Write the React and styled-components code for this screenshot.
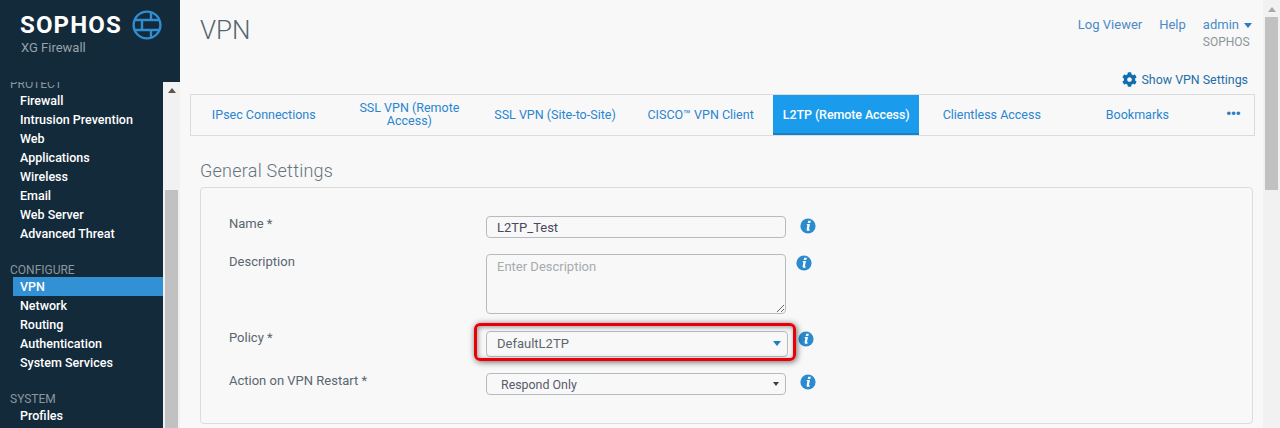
import React from "react";
import styled, { createGlobalStyle } from "styled-components";
import { FaCog } from "react-icons/fa";

const GlobalStyle = createGlobalStyle`
    html, body {
        margin: 0;
        height: 428px;
        overflow: hidden;
        background: #f8f8f8;
        font-family: Roboto, "Liberation Sans", sans-serif;
        font-size: 13px;
    }
    * {
        box-sizing: border-box;
    }
`;

const Page = styled.div`
    display: flex;
    width: 1280px;
    height: 428px;
    overflow: hidden;
`;

const Sidebar = styled.aside`
    width: 180px;
    flex-shrink: 0;
    display: flex;
    flex-direction: column;
    background: #132a3b;
`;

const Brand = styled.div`
    height: 82px;
    flex-shrink: 0;
    padding: 10px 0 0 20px;
`;

const BrandRow = styled.div`
    display: flex;
    align-items: center;
    gap: 10px;
    height: 30px;
`;

const BrandName = styled.span`
    color: #fff;
    font-size: 24px;
    font-weight: 700;
    letter-spacing: 1.15px;
    line-height: 30px;
`;

const BrandSub = styled.div`
    color: #97a2aa;
    font-size: 13px;
    margin: 0 0 0 1px;
    line-height: 16px;
`;

const SideBody = styled.div`
    flex: 1;
    display: flex;
    min-height: 0;
`;

const Nav = styled.nav`
    width: 163px;
    overflow: hidden;
`;

const NavInner = styled.div`
    margin-top: -5px;
`;

const Section = styled.div`
    margin-bottom: 20px;
`;

const SectionTitle = styled.div`
    color: #8b969e;
    font-size: 12px;
    line-height: 14px;
    padding-left: 10px;
`;

const NavItem = styled.div`
    margin-left: 13px;
    padding-left: 7px;
    height: 19px;
    line-height: 19px;
    font-size: 12.5px;
    font-weight: 500;
    color: #fff;
    background: ${(props) => (props.$active ? "#3290d4" : "transparent")};
`;

const Scrollbar = styled.div`
    flex-shrink: 0;
    width: 17px;
    background: #f1f1f1;
    display: flex;
    flex-direction: column;
    align-items: center;
`;

const ScrollArrow = styled.div`
    width: 0;
    height: 0;
    margin-top: ${(props) => props.$top}px;
    border-left: 4px solid transparent;
    border-right: 4px solid transparent;
    border-bottom: 5px solid ${(props) => props.$color};
`;

const ScrollThumb = styled.div`
    width: 13px;
    height: ${(props) => props.$height}px;
    margin-top: ${(props) => props.$gap}px;
    background: #c1c1c1;
`;

const Main = styled.main`
    flex: 1;
    min-width: 0;
    background: #f8f8f8;
`;

const TopBar = styled.header`
    height: 64px;
    padding: 0 11px 0 20px;
    display: flex;
    justify-content: space-between;
`;

const Title = styled.h1`
    margin: 14px 0 0;
    font-size: 26px;
    font-weight: 300;
    line-height: 32px;
    color: #56656f;
`;

const UserLinks = styled.div`
    display: flex;
    gap: 17px;
    padding-top: 16px;
`;

const TopLink = styled.span`
    color: #4a8ac6;
    font-size: 13px;
    line-height: 17px;
`;

const Account = styled.div`
    display: flex;
    flex-direction: column;
`;

const Org = styled.span`
    color: #8c959b;
    font-size: 12px;
    line-height: 18px;
`;

const Caret = styled.span`
    display: inline-block;
    width: 0;
    height: 0;
    margin-left: ${(props) => props.$gap || 0}px;
    vertical-align: middle;
    border-left: ${(props) => props.$size || 4}px solid transparent;
    border-right: ${(props) => props.$size || 4}px solid transparent;
    border-top: ${(props) => (props.$size || 4) + 1}px solid ${(props) => props.$color};
`;

const SettingsBar = styled.div`
    height: 30px;
    padding-right: 15px;
    display: flex;
    justify-content: flex-end;
    align-items: center;
    gap: 5px;
    color: #1f6ea8;
    font-size: 12.4px;
    svg {
        font-size: 15px;
        color: #0f6db0;
    }
`;

const Tabs = styled.div`
    display: flex;
    width: 1065px;
    height: 42px;
    margin-left: 10px;
    border: 1px solid #dcdcdc;
`;

const Tab = styled.div`
    width: 145.6px;
    flex-shrink: 0;
    padding: 0 8px;
    display: flex;
    align-items: center;
    justify-content: center;
    text-align: center;
    font-size: 12.5px;
    line-height: 13px;
    color: ${(props) => (props.$active ? "#fff" : "#2a85d0")};
    background: ${(props) => (props.$active ? "#1a9bec" : "transparent")};
    border-bottom: 2px solid ${(props) => (props.$active ? "#1a80c8" : "transparent")};
    font-weight: ${(props) => (props.$active ? 500 : 400)};
    letter-spacing: ${(props) => (props.$active ? "-0.1px" : "0")};
`;

const MoreTab = styled.div`
    flex: 1;
    display: flex;
    justify-content: center;
    align-items: center;
    padding: 0 0 2px 2px;
    color: #2a7cc4;
    font-size: 15px;
    font-weight: 700;
    letter-spacing: -0.6px;
`;

const SectionHeading = styled.h2`
    margin: 24px 0 0 20px;
    font-size: 18px;
    font-weight: 300;
    letter-spacing: 0.25px;
    line-height: 22px;
    color: #67747d;
`;

const Panel = styled.section`
    width: 1053px;
    height: 237px;
    margin: 5px 0 0 20px;
    padding: 28px 0 0 28px;
    border: 1px solid #dcdcdc;
    border-radius: 4px;
`;

const Row = styled.div`
    display: flex;
    align-items: flex-start;
    margin-bottom: ${(props) => props.$gap || 16}px;
`;

const Label = styled.label`
    width: 257px;
    flex-shrink: 0;
    font-size: 13px;
    line-height: 15px;
    color: #59666f;
    margin-top: ${(props) => props.$top || 0}px;
`;

const TextInput = styled.input`
    width: 300px;
    height: 22px;
    padding: 0 10px;
    border: 1px solid #b5bcbf;
    border-radius: 4px;
    background: #f8f8f8;
    font: 400 13px Roboto, sans-serif;
    color: #4c4760;
    outline: none;
`;

const TextArea = styled.textarea`
    display: block;
    width: 300px;
    height: 60px;
    padding: 4px 10px;
    border: 1px solid #b5bcbf;
    border-radius: 4px;
    background: #f8f8f8;
    font: 400 13px Roboto, sans-serif;
    outline: none;
    &::placeholder {
        color: #a5abaf;
    }
`;

const SelectBox = styled.div`
    width: ${(props) => (props.$large ? 302 : 300)}px;
    height: ${(props) => (props.$large ? 26 : 22)}px;
    padding: ${(props) => (props.$large ? "0 6px 2px 10px" : "0 6px 0 14px")};
    display: flex;
    align-items: center;
    justify-content: space-between;
    border: 1px solid #b5bcbf;
    border-radius: 4px;
    color: ${(props) => (props.$large ? "#5c666d" : "#575a6c")};
    font-size: ${(props) => (props.$large ? 13 : 12.4)}px;
`;

const Highlight = styled.div`
    position: relative;
    &::after {
        content: "";
        position: absolute;
        left: -12px;
        right: -8px;
        top: -8px;
        bottom: -4px;
        border: 3px solid #ea0009;
        border-radius: 6px;
        box-shadow: 1px 1px 6px rgba(0, 0, 0, 0.6), inset 1px 1px 5px rgba(0, 0, 0, 0.4);
        pointer-events: none;
    }
`;

const InfoIcon = styled.svg`
    width: 16px;
    height: 16px;
    flex-shrink: 0;
    margin-left: ${(props) => props.$left}px;
    margin-top: ${(props) => props.$top}px;
`;

const Info = ({ left, top }) => (
    <InfoIcon $left={left} $top={top} viewBox="0 0 16 16">
        <circle cx="8" cy="8" r="7.6" fill="#2a8bcf" />
        <path d="M8.2 2.7h2.6l-.5 2.3H7.7zM7.2 6.1h2.8L8.9 11c-.1.4.1.6.8.3l.1.9c-1.200.8-3.400 1-3.200-.7l.8-4.300-1-.1z" fill="#fff" />
    </InfoIcon>
);

const BrickGlobe = () => (
    <svg width="30" height="30" viewBox="0 0 30 30" fill="none" stroke="#2f8dd0" strokeWidth="2.4">
        <circle cx="15" cy="15" r="13.4" />
        <path d="M2.600 10h24.800M2.600 20h24.800M19 2v8M10 10v10M19 20v8" />
    </svg>
);

const sections = [
    { title: "PROTECT", items: ["Firewall", "Intrusion Prevention", "Web", "Applications", "Wireless", "Email", "Web Server", "Advanced Threat"] },
    { title: "CONFIGURE", items: ["VPN", "Network", "Routing", "Authentication", "System Services"] },
    { title: "SYSTEM", items: ["Profiles"] },
];

const tabs = ["IPsec Connections", "SSL VPN (Remote Access)", "SSL VPN (Site-to-Site)", "CISCO™ VPN Client", "L2TP (Remote Access)", "Clientless Access", "Bookmarks"];

export default function App() {
    return (
        <Page>
            <GlobalStyle />
            <Sidebar>
                <Brand>
                    <BrandRow>
                        <BrandName>SOPHOS</BrandName>
                        <BrickGlobe />
                    </BrandRow>
                    <BrandSub>XG Firewall</BrandSub>
                </Brand>
                <SideBody>
                    <Nav>
                        <NavInner>
                            {sections.map((section) => (
                                <Section key={section.title}>
                                    <SectionTitle>{section.title}</SectionTitle>
                                    {section.items.map((item) => (
                                        <NavItem key={item} $active={item === "VPN"}>
                                            {item}
                                        </NavItem>
                                    ))}
                                </Section>
                            ))}
                        </NavInner>
                    </Nav>
                    <Scrollbar>
                        <ScrollArrow $top={6} $color="#5f5350" />
                        <ScrollThumb $gap={97} $height={240} />
                    </Scrollbar>
                </SideBody>
            </Sidebar>
            <Main>
                <TopBar>
                    <Title>VPN</Title>
                    <UserLinks>
                        <TopLink>Log Viewer</TopLink>
                        <TopLink>Help</TopLink>
                        <Account>
                            <TopLink>
                                admin
                                <Caret $gap={5} $color="#2a7cc4" />
                            </TopLink>
                            <Org>SOPHOS</Org>
                        </Account>
                    </UserLinks>
                </TopBar>
                <SettingsBar>
                    <FaCog />
                    Show VPN Settings
                </SettingsBar>
                <Tabs>
                    {tabs.map((tab) => (
                        <Tab key={tab} $active={tab.startsWith("L2TP")}>
                            {tab}
                        </Tab>
                    ))}
                    <MoreTab>•••</MoreTab>
                </Tabs>
                <SectionHeading>General Settings</SectionHeading>
                <Panel>
                    <Row>
                        <Label>Name *</Label>
                        <TextInput defaultValue="L2TP_Test" />
                        <Info left={14} top={2} />
                    </Row>
                    <Row $gap={17}>
                        <Label>Description</Label>
                        <TextArea placeholder="Enter Description" />
                        <Info left={10} top={1} />
                    </Row>
                    <Row>
                        <Label $top={-1}>Policy *</Label>
                        <Highlight>
                            <SelectBox $large>
                                DefaultL2TP
                                <Caret $color="#1f7fc4" />
                            </SelectBox>
                        </Highlight>
                        <Info left={10} top={0} />
                    </Row>
                    <Row>
                        <Label>Action on VPN Restart *</Label>
                        <SelectBox>
                            Respond Only
                            <Caret $size={3} $color="#3a3f44" />
                        </SelectBox>
                        <Info left={14} top={1} />
                    </Row>
                </Panel>
            </Main>
            <Scrollbar>
                <ScrollArrow $top={7} $color="#a9a9a9" />
                <ScrollThumb $gap={5} $height={173} />
            </Scrollbar>
        </Page>
    );
}
